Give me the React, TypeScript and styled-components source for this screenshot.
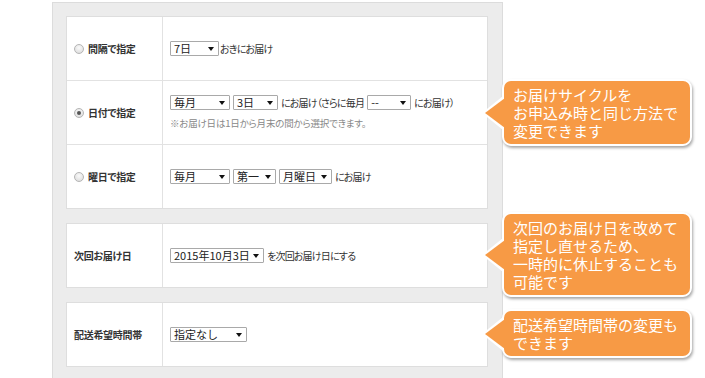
import React from "react";
import styled, { createGlobalStyle } from "styled-components";

const Global = createGlobalStyle`
  html, body { margin: 0; padding: 0; background: #fff; }
  body { font-family: "Noto Sans CJK JP", "Noto Sans", sans-serif; color: #333; }
`;

const Page = styled.div`
  position: relative;
  width: 705px;
  height: 378px;
  overflow: hidden;
  background: #fff;
`;

const Panel = styled.div`
  box-sizing: border-box;
  margin: 2px 0 0 52px;
  width: 451px;
  min-height: 420px;
  border: 1px solid #dcdcdc;
  background: #ececec;
  padding: 13px 14px 13px 13px;
  display: flex;
  flex-direction: column;
  gap: 14px;
`;

const Table = styled.div`
  background: #fff;
  border: 1px solid #dedede;
  display: flex;
  flex-direction: column;
`;

const Row = styled.div`
  display: grid;
  grid-template-columns: 96px 1fr;
  height: 63px;
  & + & {
    border-top: 1px solid #e2e2e2;
  }
`;

const LabelCell = styled.div`
  border-right: 1px solid #e2e2e2;
  padding-left: 7px;
  display: flex;
  align-items: center;
  gap: 4px;
  font-size: 10px;
  font-weight: bold;
  color: #333;
  letter-spacing: -0.3px;
  font-feature-settings: "palt";
`;

const Radio = styled.span<{ $checked?: boolean }>`
  box-sizing: border-box;
  width: 10px;
  height: 10px;
  border-radius: 50%;
  border: 1px solid #b5b5b5;
  background: radial-gradient(circle at 50% 35%, #fafafa, #d8d8d8);
  display: inline-flex;
  align-items: center;
  justify-content: center;
  &::after {
    content: "";
    width: 4px;
    height: 4px;
    border-radius: 50%;
    background: ${(p) => (p.$checked ? "#555" : "transparent")};
  }
`;

const ContentCell = styled.div`
  padding-left: 7px;
  display: flex;
  flex-direction: column;
  justify-content: center;
  gap: 6px;
`;

const Line = styled.div`
  display: flex;
  align-items: center;
  gap: 3px;
  font-size: 10px;
  color: #333;
  white-space: nowrap;
`;

const Text = styled.span<{ $pull?: boolean }>`
  font-feature-settings: "palt";
  letter-spacing: -0.8px;
  margin-left: ${(p) => (p.$pull ? "-2px" : "0")};
`;

const Note = styled.div`
  font-size: 9.5px;
  color: #888;
  font-feature-settings: "palt";
  letter-spacing: -0.2px;
  white-space: nowrap;
`;

const SelectBox = styled.span<{ $w: number }>`
  box-sizing: border-box;
  width: ${(p) => p.$w}px;
  height: 15px;
  border: 1px solid #a9a9a9;
  border-radius: 1px;
  background: #fff;
  display: inline-flex;
  align-items: center;
  justify-content: space-between;
  padding: 0 4px 0 3px;
  font-size: 11px;
  color: #222;
  line-height: 1;
`;

const Arrow = () => (
  <svg width="6" height="4" viewBox="0 0 6 4">
    <path d="M0 0 L6 0 L3 4 Z" fill="#111" />
  </svg>
);

const Select = ({ w, children }: { w: number; children: React.ReactNode }) => (
  <SelectBox $w={w}>
    <span>{children}</span>
    <Arrow />
  </SelectBox>
);

const Bubble = styled.div<{ $top: number }>`
  position: absolute;
  left: 502px;
  top: ${(p) => p.$top}px;
  width: 190px;
  box-sizing: border-box;
  background: #f79a45;
  border: 2px solid #fff;
  border-radius: 9px;
  box-shadow: 1px 2px 3px rgba(0, 0, 0, 0.35);
  padding: 5px 8px 4px 9px;
  color: #fff;
  font-size: 15px;
  white-space: nowrap;
  &::before {
    content: "";
    position: absolute;
    left: -22px;
    top: 50%;
    margin-top: -17px;
    border-style: solid;
    border-width: 17px 21px 17px 0;
    border-color: transparent #fff transparent transparent;
  }
  &::after {
    content: "";
    position: absolute;
    left: -19px;
    top: 50%;
    margin-top: -15px;
    border-style: solid;
    border-width: 15px 20px 15px 0;
    border-color: transparent #f79a45 transparent transparent;
  }
`;

const BubbleLine = styled.div`
  height: 18px;
  line-height: 18px;
`;

const Callout = ({ top, lines }: { top: number; lines: string[] }) => (
  <Bubble $top={top}>
    {lines.map((l) => (
      <BubbleLine key={l}>{l}</BubbleLine>
    ))}
  </Bubble>
);

export default function App() {
  return (
    <>
      <Global />
      <Page>
        <Panel>
          <Table>
            <Row>
              <LabelCell>
                <Radio />
                間隔で指定
              </LabelCell>
              <ContentCell>
                <Line>
                  <Select w={49}>7日</Select>
                  <Text $pull>おきにお届け</Text>
                </Line>
              </ContentCell>
            </Row>
            <Row>
              <LabelCell>
                <Radio $checked />
                日付で指定
              </LabelCell>
              <ContentCell>
                <Line>
                  <Select w={60}>毎月</Select>
                  <Select w={45}>3日</Select>
                  <Text>にお届け（さらに毎月</Text>
                  <Select w={44}>--</Select>
                  <Text>にお届け）</Text>
                </Line>
                <Note>※お届け日は1日から月末の間から選択できます。</Note>
              </ContentCell>
            </Row>
            <Row>
              <LabelCell>
                <Radio />
                曜日で指定
              </LabelCell>
              <ContentCell>
                <Line>
                  <Select w={60}>毎月</Select>
                  <Select w={43}>第一</Select>
                  <Select w={53}>月曜日</Select>
                  <Text>にお届け</Text>
                </Line>
              </ContentCell>
            </Row>
          </Table>
          <Table>
            <Row>
              <LabelCell>次回お届け日</LabelCell>
              <ContentCell>
                <Line>
                  <Select w={94}>2015年10月3日</Select>
                  <Text>を次回お届け日にする</Text>
                </Line>
              </ContentCell>
            </Row>
          </Table>
          <Table>
            <Row>
              <LabelCell>配送希望時間帯</LabelCell>
              <ContentCell>
                <Line>
                  <Select w={77}>指定なし</Select>
                </Line>
              </ContentCell>
            </Row>
          </Table>
        </Panel>
        <Callout top={79} lines={["お届けサイクルを", "お申込み時と同じ方法で", "変更できます"]} />
        <Callout
          top={212}
          lines={["次回のお届け日を改めて", "指定し直せるため、", "一時的に休止することも", "可能です"]}
        />
        <Callout top={309} lines={["配送希望時間帯の変更も", "できます"]} />
      </Page>
    </>
  );
}
